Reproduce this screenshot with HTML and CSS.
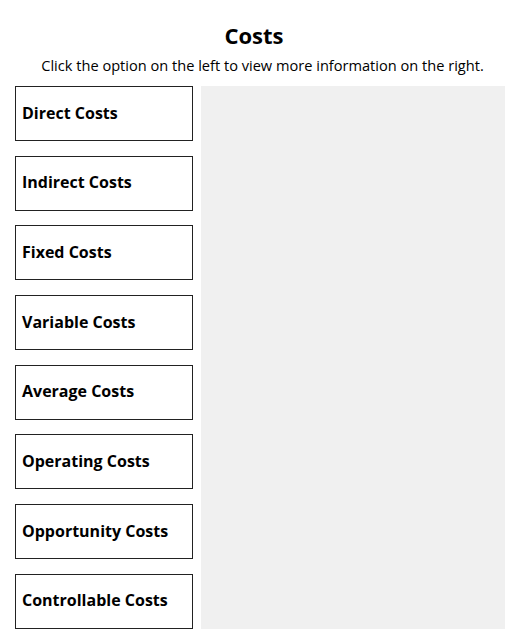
FILE: index.html
```html
<!DOCTYPE html>
<html lang="en">
<head>
    <meta charset="UTF-8">
    <meta name="viewport" content="width=device-width, initial-scale=1.0">
    <title>Costs</title>
    <link rel="stylesheet" href="styles.css">
</head>
<body>
    <div class="page">
        <h1 class="title">Costs</h1>
        <p class="intro">Click the option on the left to view more information on the right.</p>

        <div class="explorer">
            <div class="options">
                <button class="option">Direct Costs</button>
                <button class="option">Indirect Costs</button>
                <button class="option">Fixed Costs</button>
                <button class="option">Variable Costs</button>
                <button class="option">Average Costs</button>
                <button class="option">Operating Costs</button>
                <button class="option">Opportunity Costs</button>
                <button class="option">Controllable Costs</button>
            </div>
            <div class="details"></div>
        </div>
    </div>
</body>
</html>
```

FILE: styles.css
```css
body {
    font-family: 'Open Sans', sans-serif;
    margin: 0;
    padding: 0;
    background-color: #ffffff;
    color: #000;
}
.page {
    padding: 0 15px;
}
.title {
    margin: 0;
    padding-top: 21px;
    padding-right: 12px;
    font-size: 22px;
    line-height: 28px;
    font-weight: bold;
    text-align: center;
}
.intro {
    margin: 0;
    padding-top: 3px;
    padding-left: 5px;
    font-size: 14.6px;
    line-height: 26px;
    text-align: center;
}
.explorer {
    display: flex;
    gap: 8px;
    margin-top: 8px;
}
.options {
    display: flex;
    flex-direction: column;
    gap: 14.7px;
    width: 178px;
    flex-shrink: 0;
}
.option {
    height: 55px;
    padding: 0 6px 2px;
    background: white;
    border: 1px solid #222;
    font-family: inherit;
    font-size: 16px;
    font-weight: bold;
    text-align: left;
    color: #000;
    cursor: pointer;
}
.details {
    flex: 1;
    background-color: #f0f0f0;
}
```
